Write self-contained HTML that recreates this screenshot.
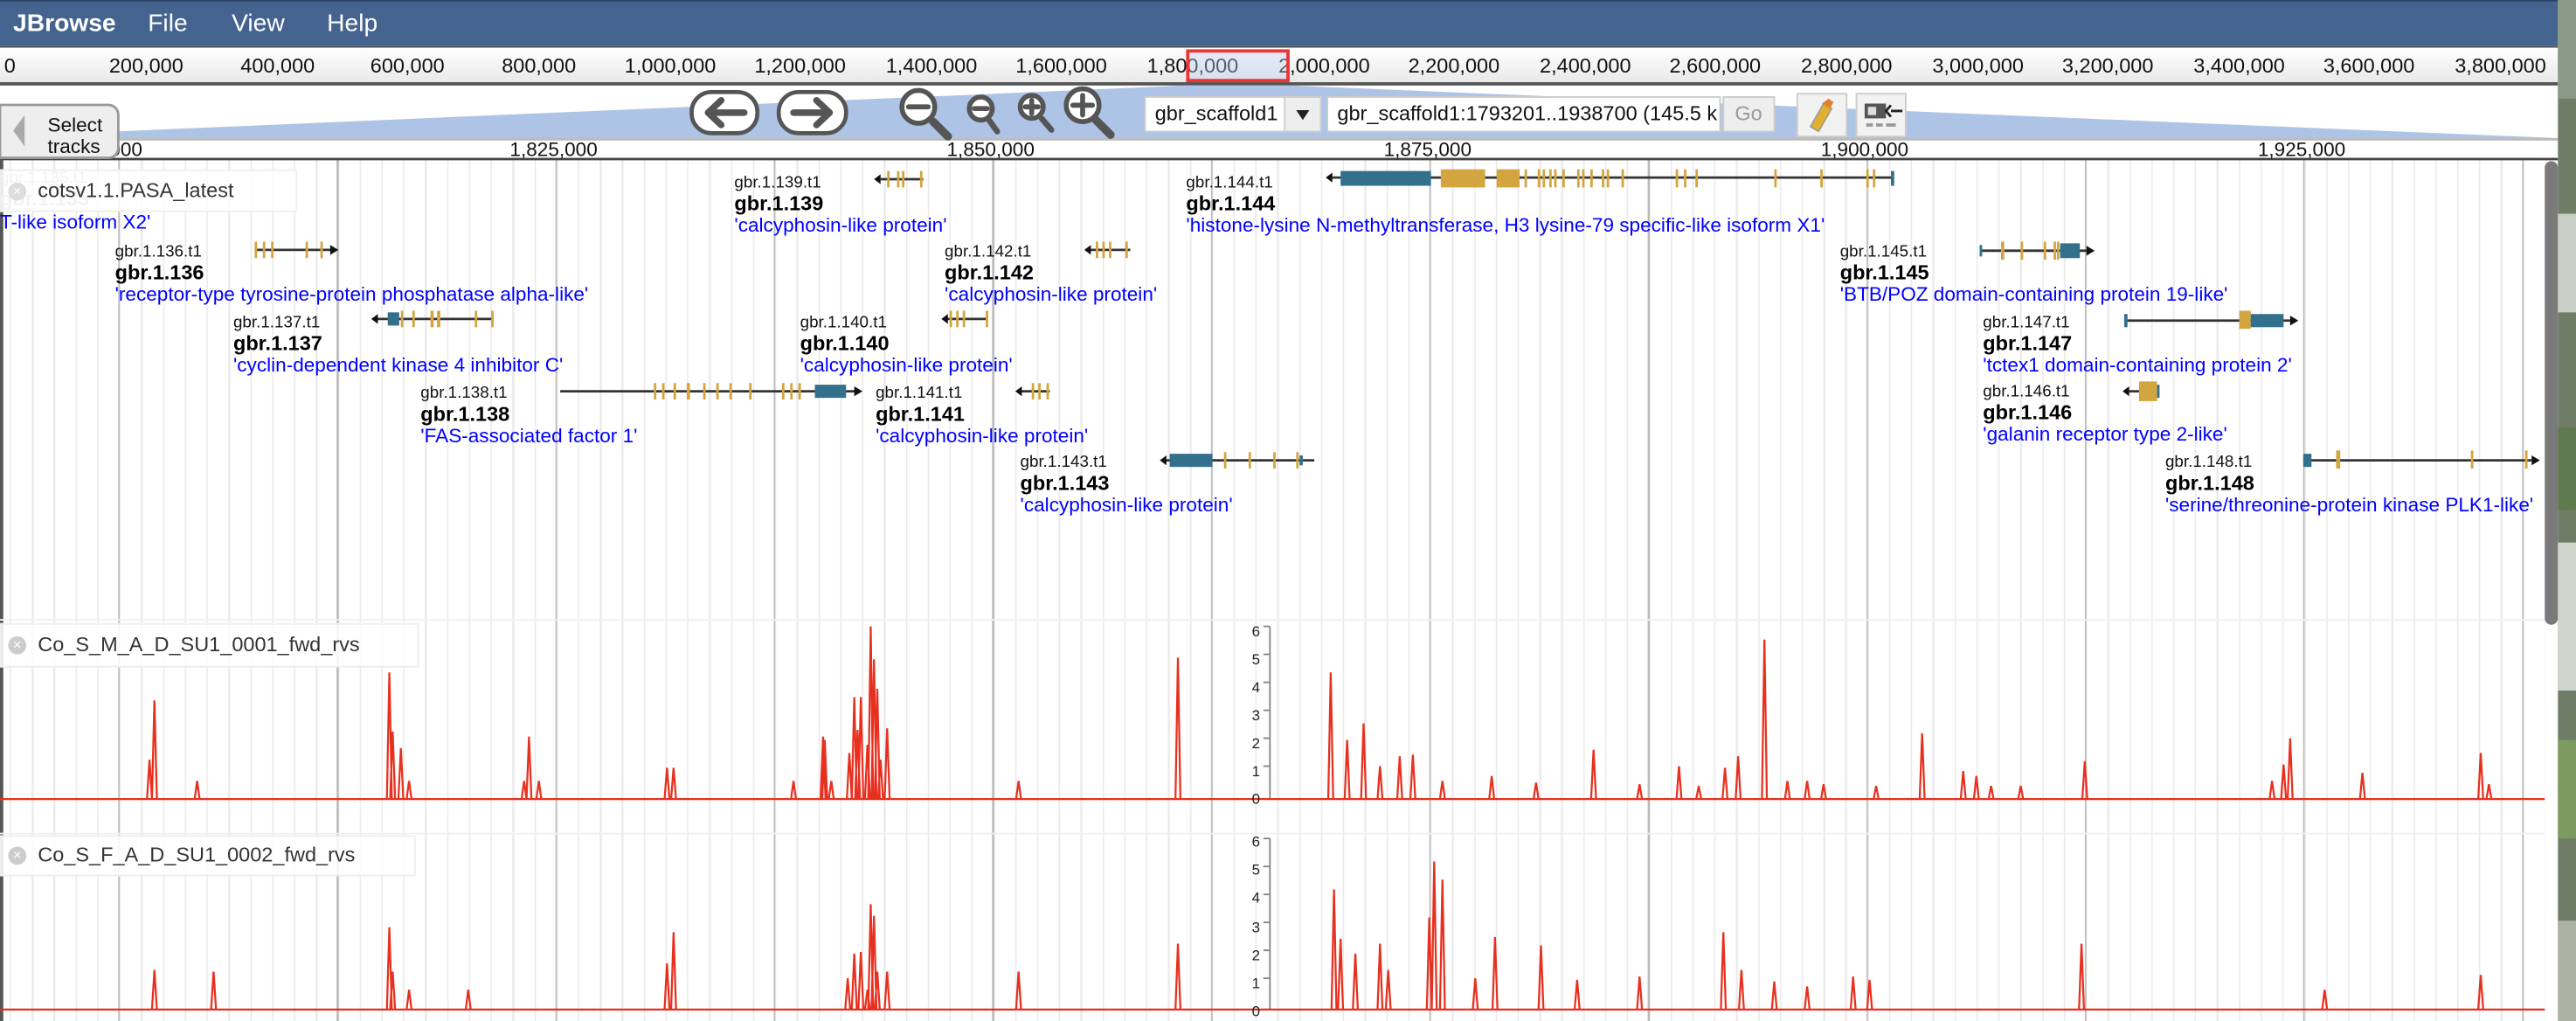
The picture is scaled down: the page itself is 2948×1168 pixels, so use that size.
<!DOCTYPE html>
<html><head><meta charset="utf-8"><style>
*{margin:0;padding:0;box-sizing:border-box}
html,body{width:2948px;height:1168px;overflow:hidden;background:#fff}
#s{position:absolute;left:0;top:0;width:1568px;height:621px;transform:scale(1.88010,1.88084);transform-origin:0 0;font-family:"Liberation Sans",Arial,sans-serif;overflow:hidden;background:#fff}
.a{position:absolute;white-space:nowrap}
.menu{left:0;top:0;width:1557px;height:28px;background:#45638f;border-top:1px solid #2c4466}
.menu span{position:absolute;top:5px;color:#fff;font-size:15px}
.ov{left:0;top:28px;width:1557px;height:24px;background:linear-gradient(#fff,#e9e9e9);border-top:1px solid #555;border-bottom:2px solid #555}
.ov span{position:absolute;top:4px;font-size:12.5px;color:#111;transform:translateX(-50%)}
.rl span{position:absolute;top:84px;font-size:12px;color:#111;transform:translateX(-50%)}
.grid{left:0;top:97px;width:1549px;height:524px;background:repeating-linear-gradient(90deg,#b9b9b9 0 1px,transparent 1px 133px) 72px 0,repeating-linear-gradient(90deg,#ebebeb 0 1px,transparent 1px 13.3px) 6px 0;}
.lb{position:absolute;font-size:10px;line-height:13px;color:#111}
.lb b{display:block;font-size:12.5px;color:#000}
.lb i{display:block;font-style:normal;font-size:12px;color:#00f}
.hd{position:absolute;background:rgba(255,255,255,.85);border:1px solid #eee;font-size:12.5px;color:#333;padding:5px 0 0 22px}
.cx{position:absolute;left:4px;top:7px;width:11px;height:11px;border-radius:50%;background:#ccc;color:#fff;font-size:9px;line-height:11px;text-align:center}
</style></head><body><div id="s">
<div class="a menu"><span style="left:8px;font-weight:bold">JBrowse</span><span style="left:90px">File</span><span style="left:141px">View</span><span style="left:199px">Help</span></div>
<div class="a ov">
<span style="left:6px">0</span><span style="left:89px">200,000</span><span style="left:169px">400,000</span><span style="left:248px">600,000</span><span style="left:328px">800,000</span><span style="left:408px">1,000,000</span><span style="left:487px">1,200,000</span><span style="left:567px">1,400,000</span><span style="left:646px">1,600,000</span><span style="left:726px">1,800,000</span><span style="left:806px">2,000,000</span><span style="left:885px">2,200,000</span><span style="left:965px">2,400,000</span><span style="left:1044px">2,600,000</span><span style="left:1124px">2,800,000</span><span style="left:1204px">3,000,000</span><span style="left:1283px">3,200,000</span><span style="left:1363px">3,400,000</span><span style="left:1442px">3,600,000</span><span style="left:1522px">3,800,000</span>
<div style="position:absolute;left:722px;top:1px;width:63px;height:20px;border:2px solid #e33;background:rgba(190,210,240,.4)"></div>
</div>
<div class="a grid"></div>
<svg class="a" style="left:0;top:0" width="1568" height="621">
<polygon points="0,83 722,52 785,52 1557,84 1557,85 0,85" fill="#aec4e6"/>
<rect x="0" y="84" width="1557" height="1.5" fill="#bbb"/>
<rect x="0" y="96" width="1557" height="1.5" fill="#444"/>
<rect x="0" y="97" width="2" height="524" fill="#555"/>
<line x1="0" y1="377" x2="1549" y2="377" stroke="#f0f0f0"/><line x1="0" y1="507" x2="1549" y2="507" stroke="#f0f0f0"/>
<g fill="#fff" stroke="#555" stroke-width="2.5"><rect x="421" y="56" width="40" height="25" rx="12"/><rect x="474" y="56" width="41" height="25" rx="12"/></g>
<g stroke="#555" stroke-width="4" fill="none" stroke-linecap="round" stroke-linejoin="round"><path d="M453 68.5H431M439 61l-8 7.5 8 7.5"/><path d="M483 68.5H505M497 61l8 7.5-8 7.5"/></g>
<g stroke="#555" fill="#fff" stroke-width="3" stroke-linecap="round">
<path d="M568 74l9 9" stroke-width="5"/><circle cx="559" cy="65" r="10"/><path d="M553 65h12"/>
<path d="M602 73l5 7" stroke-width="3.5"/><circle cx="597" cy="66" r="7"/><path d="M593 66h8"/>
<path d="M634 72l6 7" stroke-width="3.5"/><circle cx="628" cy="65" r="7"/><path d="M624 65h8M628 61v8"/>
<path d="M667 73l9 9" stroke-width="5"/><circle cx="659" cy="64" r="10"/><path d="M653 64h12M659 58v12"/>
</g>
<rect x="697" y="59" width="107" height="21" fill="#fff" stroke="#ccc"/><rect x="782" y="59" width="22" height="21" fill="#eee" stroke="#ccc"/>
<path d="M789 67h8l-4 6z" fill="#222"/>
<rect x="808" y="59" width="239" height="21" fill="#fff" stroke="#ccc"/>
<rect x="1049" y="59" width="31" height="21" fill="#eee" stroke="#ccc"/>
<rect x="1094" y="57" width="30" height="26" fill="#f2f2f2" stroke="#ccc"/><rect x="1130" y="57" width="30" height="26" fill="#f2f2f2" stroke="#ccc"/>
<path d="M1102 77l8-14 5 3-8 14z" fill="#e0b030" stroke="#999" stroke-width=".8"/><path d="M1109 63l4-3 3 2-2 4z" fill="#e08030"/>
<rect x="1135" y="63" width="13" height="9" fill="#555"/><rect x="1137" y="65" width="5" height="5" fill="#ddd"/><path d="M1158 67.5h-7M1151 64l-3 3.5 3 3.5" stroke="#222" stroke-width="1.5" fill="none"/><path d="M1136 76h4M1142 76h4M1148 76h6" stroke="#999" stroke-width="2"/>
<rect x="1549" y="98" width="8" height="282" rx="4" fill="#7a7a7a"/>
<rect x="1557" y="0" width="11" height="621" fill="#6f7c66"/>
<rect x="1557" y="0" width="11" height="60" fill="#8a9a86"/><rect x="1557" y="130" width="11" height="60" fill="#c9cfc4"/><rect x="1557" y="260" width="11" height="50" fill="#5f7a4c"/><rect x="1557" y="330" width="11" height="90" fill="#cfd6cc"/><rect x="1557" y="450" width="11" height="60" fill="#7d9a60"/><rect x="1557" y="560" width="11" height="61" fill="#aab3a3"/>
<g stroke="#333" stroke-width="1.5"><path d="M155 152H202M229 194H300M341 238H521M536 109H562M576 194H601M621 238H639M663 152H688M709 280H800M811 108H1152M1205 152.5H1270M1293 195H1394M1296 238H1313M1402 280H1541"/></g>
<g fill="#111"><path d="M201 149l5 3-5 3zM226 194l4-3v6zM520 235l5 3-5 3zM532 109l4-3v6zM573 194l4-3v6zM618 238l4-3v6zM660 152l4-3v6zM706 280l4-3v6zM807 108l4-3v6zM1270 149.5l5 3-5 3zM1394 192l5 3-5 3zM1292 238l4-3v6zM1541 277l5 3-5 3z"/></g>
<g fill="#d3a53e">
<rect x="155" y="147" width="1.5" height="10"/><rect x="160" y="147" width="1.5" height="10"/><rect x="165" y="147" width="1.5" height="10"/><rect x="186" y="147" width="1.5" height="10"/><rect x="195" y="147" width="1.5" height="10"/>
<rect x="244" y="189" width="1.5" height="10"/><rect x="251" y="189" width="1.5" height="10"/><rect x="262" y="189" width="2" height="10"/><rect x="266" y="189" width="2" height="10"/><rect x="289" y="189" width="1.5" height="10"/><rect x="299" y="189" width="1.5" height="10"/>
<rect x="398" y="233" width="1.5" height="10"/><rect x="403" y="233" width="1.5" height="10"/><rect x="410" y="233" width="1.5" height="10"/><rect x="418" y="233" width="2" height="10"/><rect x="428" y="233" width="1.5" height="10"/><rect x="436" y="233" width="1.5" height="10"/><rect x="444" y="233" width="1.5" height="10"/><rect x="456" y="233" width="1.5" height="10"/><rect x="476" y="233" width="1.5" height="10"/><rect x="481" y="233" width="1.5" height="10"/><rect x="486" y="233" width="1.5" height="10"/>
<rect x="540" y="104" width="1.5" height="10"/><rect x="546" y="104" width="1.5" height="10"/><rect x="549" y="104" width="1.5" height="10"/><rect x="560" y="104" width="1.5" height="10"/>
<rect x="578" y="189" width="1.5" height="10"/><rect x="582" y="189" width="1.5" height="10"/><rect x="586" y="189" width="1.5" height="10"/><rect x="600" y="189" width="1.5" height="10"/>
<rect x="628" y="233" width="1.5" height="10"/><rect x="632" y="233" width="1.5" height="10"/><rect x="637" y="233" width="1.5" height="10"/>
<rect x="667" y="147" width="1.5" height="10"/><rect x="671" y="147" width="1.5" height="10"/><rect x="675" y="147" width="1.5" height="10"/><rect x="685" y="147" width="1.5" height="10"/>
<rect x="745" y="275" width="1.5" height="10"/><rect x="760" y="275" width="1.5" height="10"/><rect x="775" y="275" width="1.5" height="10"/><rect x="789" y="275" width="1.5" height="10"/>
<rect x="877" y="103" width="27" height="11"/><rect x="911" y="103" width="14" height="11"/>
<rect x="928" y="103" width="1.5" height="11"/><rect x="936" y="103" width="1.5" height="11"/><rect x="939" y="103" width="1.5" height="11"/><rect x="943" y="103" width="1.5" height="11"/><rect x="946" y="103" width="1.5" height="11"/><rect x="951" y="103" width="1.5" height="11"/><rect x="960" y="103" width="1.5" height="11"/><rect x="963" y="103" width="1.5" height="11"/><rect x="968" y="103" width="1.5" height="11"/><rect x="975" y="103" width="1.5" height="11"/><rect x="978" y="103" width="1.5" height="11"/><rect x="987" y="103" width="1.5" height="11"/><rect x="1020" y="103" width="1.5" height="11"/><rect x="1025" y="103" width="1.5" height="11"/><rect x="1032" y="103" width="1.5" height="11"/><rect x="1080" y="103" width="1.5" height="11"/><rect x="1108" y="103" width="1.5" height="11"/><rect x="1136" y="103" width="1.5" height="11"/><rect x="1140" y="103" width="1.5" height="11"/>
<rect x="1218" y="147" width="2" height="11"/><rect x="1230" y="147" width="1.5" height="11"/><rect x="1244" y="147" width="1.5" height="11"/><rect x="1250" y="147" width="1.5" height="11"/><rect x="1252" y="147" width="1.5" height="11"/>
<rect x="1363" y="189" width="7" height="11"/>
<rect x="1302" y="232" width="11" height="12"/>
<rect x="1422" y="274" width="2.5" height="11"/><rect x="1504" y="274" width="1.5" height="11"/><rect x="1537" y="274" width="1.5" height="11"/>
</g>
<g fill="#33708c">
<rect x="236" y="190" width="7" height="8"/><rect x="496" y="234" width="19" height="8"/><rect x="712" y="276" width="26" height="8"/><rect x="791" y="277" width="2" height="6"/>
<rect x="816" y="104" width="55" height="9"/><rect x="1151" y="104" width="2" height="9"/>
<rect x="1254" y="148" width="12" height="9"/><rect x="1205" y="149" width="1.5" height="7"/>
<rect x="1293" y="191" width="2" height="8"/><rect x="1370" y="191" width="20" height="8"/><rect x="1313" y="234" width="1.5" height="8"/>
<rect x="1402" y="276" width="5" height="8"/>
</g>
<g stroke="#888" stroke-width="1"><path d="M773 381V486M769 381h4M769 398h4M769 415h4M769 432h4M769 449h4M769 466h4M769 486h4"/><path d="M773 510V614M769 510h4M769 527h4M769 544h4M769 561h4M769 578h4M769 595h4M769 614h4"/></g>
<g stroke="#e8301f" stroke-width="1.2" fill="none">
<path d="M0 486H1549M0 614H1549"/>
<path d="M89.5 486l1.5-24 1.5 24M92.5 486l1.5-60 1.5 60M118.5 486l1.5-11 1.5 11M235.5 486l1.5-77 1.5 77M237.5 486l1.5-41 1.5 41M242.5 486l1.5-31 1.5 31M247.5 486l1.5-11 1.5 11M317.5 486l1.5-11 1.5 11M320.5 486l1.5-38 1.5 38M326.5 486l1.5-11 1.5 11M404.5 486l1.5-19 1.5 19M408.5 486l1.5-19 1.5 19M481.5 486l1.5-11 1.5 11M499.5 486l1.5-38 1.5 38M500.5 486l1.5-36 1.5 36M504.5 486l1.5-11 1.5 11M515.5 486l1.5-28 1.5 28M518.5 486l1.5-62 1.5 62M520.5 486l1.5-42 1.5 42M522.5 486l1.5-62 1.5 62M526.5 486l1.5-33 1.5 33M528.5 486l1.5-105 1.5 105M530.5 486l1.5-85 1.5 85M532.5 486l1.5-67 1.5 67M534.5 486l1.5-24 1.5 24M538.5 486l1.5-43 1.5 43M618.5 486l1.5-11 1.5 11M715.5 486l1.5-86 1.5 86M808.5 486l1.5-77 1.5 77M818.5 486l1.5-36 1.5 36M828.5 486l1.5-46 1.5 46M838.5 486l1.5-20 1.5 20M850.5 486l1.5-26 1.5 26M858.5 486l1.5-27 1.5 27M876.5 486l1.5-11 1.5 11M906.5 486l1.5-14 1.5 14M933.5 486l1.5-10 1.5 10M968.5 486l1.5-30 1.5 30M996.5 486l1.5-9 1.5 9M1020.5 486l1.5-20 1.5 20M1032.5 486l1.5-8 1.5 8M1048.5 486l1.5-19 1.5 19M1056.5 486l1.5-26 1.5 26M1072.5 486l1.5-97 1.5 97M1086.5 486l1.5-11 1.5 11M1098.5 486l1.5-11 1.5 11M1108.5 486l1.5-9 1.5 9M1140.5 486l1.5-8 1.5 8M1168.5 486l1.5-40 1.5 40M1193.5 486l1.5-17 1.5 17M1201.5 486l1.5-14 1.5 14M1210.5 486l1.5-8 1.5 8M1228.5 486l1.5-8 1.5 8M1267.5 486l1.5-23 1.5 23M1381.5 486l1.5-11 1.5 11M1388.5 486l1.5-21 1.5 21M1392.5 486l1.5-37 1.5 37M1436.5 486l1.5-16 1.5 16M1508.5 486l1.5-28 1.5 28M1513.5 486l1.5-9 1.5 9"/>
<path d="M92.5 614l1.5-24 1.5 24M128.5 614l1.5-23 1.5 23M235.5 614l1.5-50 1.5 50M237.5 614l1.5-23 1.5 23M247.5 614l1.5-12 1.5 12M283.5 614l1.5-12 1.5 12M404.5 614l1.5-28 1.5 28M408.5 614l1.5-47 1.5 47M514.5 614l1.5-19 1.5 19M518.5 614l1.5-34 1.5 34M522.5 614l1.5-35 1.5 35M526.5 614l1.5-12 1.5 12M528.5 614l1.5-64 1.5 64M530.5 614l1.5-57 1.5 57M532.5 614l1.5-23 1.5 23M538.5 614l1.5-23 1.5 23M618.5 614l1.5-23 1.5 23M715.5 614l1.5-40 1.5 40M810.5 614l1.5-73 1.5 73M814.5 614l1.5-43 1.5 43M823.5 614l1.5-34 1.5 34M838.5 614l1.5-40 1.5 40M843.5 614l1.5-24 1.5 24M868.5 614l1.5-56 1.5 56M871.5 614l1.5-90 1.5 90M876.5 614l1.5-79 1.5 79M896.5 614l1.5-19 1.5 19M908.5 614l1.5-44 1.5 44M936.5 614l1.5-39 1.5 39M958.5 614l1.5-18 1.5 18M996.5 614l1.5-20 1.5 20M1047.5 614l1.5-47 1.5 47M1058.5 614l1.5-24 1.5 24M1078.5 614l1.5-17 1.5 17M1098.5 614l1.5-14 1.5 14M1126.5 614l1.5-20 1.5 20M1136.5 614l1.5-18 1.5 18M1265.5 614l1.5-40 1.5 40M1413.5 614l1.5-12 1.5 12M1508.5 614l1.5-21 1.5 21"/>
</g>
</svg>
<div class="rl"><span style="left:60px">1,800,000</span><span style="left:337px">1,825,000</span><span style="left:603px">1,850,000</span><span style="left:869px">1,875,000</span><span style="left:1135px">1,900,000</span><span style="left:1401px">1,925,000</span></div>
<svg class="a" style="left:0;top:63px" width="73" height="35"><path d="M0 0.8H66a6 6 0 0 1 6 6V27a6 6 0 0 1-6 6H0z" fill="#eee" stroke="#999" stroke-width="1.5"/><path d="M15 7v19l-7-9.5z" fill="#aaa"/></svg>
<div class="a" style="left:29px;top:70px;font-size:12px;line-height:13px;color:#111">Select<br>tracks</div>
<div class="a" style="left:814px;top:62px;width:231px;overflow:hidden;font-size:12.5px;color:#111">gbr_scaffold1:1793201..1938700 (145.5 kb)</div>
<div class="a" style="left:703px;top:62px;font-size:12.5px;color:#111">gbr_scaffold1</div>
<div class="a" style="left:1056px;top:62px;font-size:12.5px;color:#999">Go</div>
<div class="lb" style="left:0;top:102px;color:#aaa">gbr.1.135.t1<b style="color:#aaa">gbr.1.135</b></div>
<div class="hd" style="left:0;top:103px;width:181px;height:26px">cotsv1.1.PASA_latest<span class="cx" style="background:#ddd">×</span></div>
<div class="lb" style="left:0;top:128.5px"><i>T-like isoform X2'</i></div>
<div class="lb" style="left:70px;top:146.5px">gbr.1.136.t1<b>gbr.1.136</b><i>'receptor-type tyrosine-protein phosphatase alpha-like'</i></div>
<div class="lb" style="left:142px;top:189.5px">gbr.1.137.t1<b>gbr.1.137</b><i>'cyclin-dependent kinase 4 inhibitor C'</i></div>
<div class="lb" style="left:256px;top:232.5px">gbr.1.138.t1<b>gbr.1.138</b><i>'FAS-associated factor 1'</i></div>
<div class="lb" style="left:447px;top:104.5px">gbr.1.139.t1<b>gbr.1.139</b><i>'calcyphosin-like protein'</i></div>
<div class="lb" style="left:487px;top:189.5px">gbr.1.140.t1<b>gbr.1.140</b><i>'calcyphosin-like protein'</i></div>
<div class="lb" style="left:533px;top:232.5px">gbr.1.141.t1<b>gbr.1.141</b><i>'calcyphosin-like protein'</i></div>
<div class="lb" style="left:575px;top:146.5px">gbr.1.142.t1<b>gbr.1.142</b><i>'calcyphosin-like protein'</i></div>
<div class="lb" style="left:621px;top:274.5px">gbr.1.143.t1<b>gbr.1.143</b><i>'calcyphosin-like protein'</i></div>
<div class="lb" style="left:722px;top:104.5px">gbr.1.144.t1<b>gbr.1.144</b><i>'histone-lysine N-methyltransferase, H3 lysine-79 specific-like isoform X1'</i></div>
<div class="lb" style="left:1120px;top:146.5px">gbr.1.145.t1<b>gbr.1.145</b><i>'BTB/POZ domain-containing protein 19-like'</i></div>
<div class="lb" style="left:1207px;top:189.5px">gbr.1.147.t1<b>gbr.1.147</b><i>'tctex1 domain-containing protein 2'</i></div>
<div class="lb" style="left:1207px;top:231.5px">gbr.1.146.t1<b>gbr.1.146</b><i>'galanin receptor type 2-like'</i></div>
<div class="lb" style="left:1318px;top:274.5px;width:231px;overflow:hidden">gbr.1.148.t1<b>gbr.1.148</b><i>'serine/threonine-protein kinase PLK1-like'</i></div>
<div class="hd" style="left:0;top:379px;width:255px;height:27px">Co_S_M_A_D_SU1_0001_fwd_rvs<span class="cx">×</span></div>
<div class="hd" style="left:0;top:508px;width:253px;height:25px;padding-top:4px">Co_S_F_A_D_SU1_0002_fwd_rvs<span class="cx" style="top:6px">×</span></div>
<div class="a" style="left:762px;top:376px;font-size:9px;line-height:17px;color:#222">6<br>5<br>4<br>3<br>2<br>1<br>0</div>
<div class="a" style="left:762px;top:504px;font-size:9px;line-height:17.2px;color:#222">6<br>5<br>4<br>3<br>2<br>1<br>0</div>
</div></body></html>
